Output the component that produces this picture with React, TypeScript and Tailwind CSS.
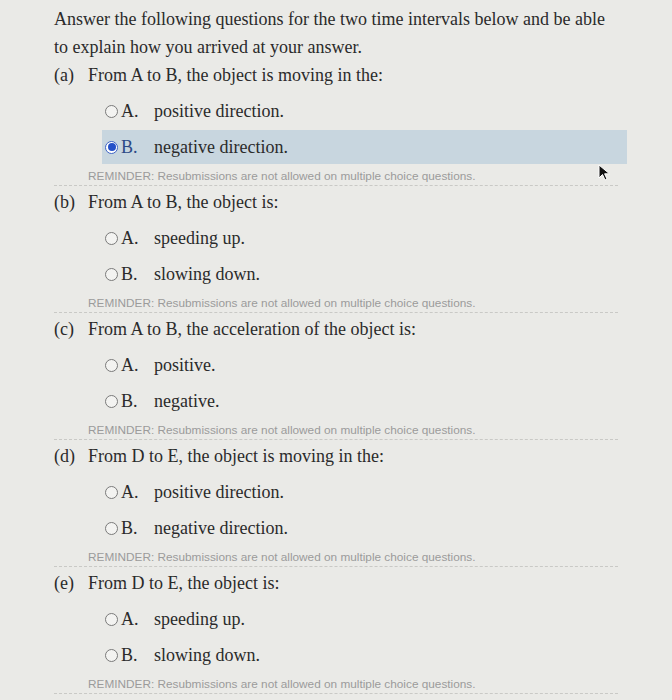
import React from "react";

type Question = {
  label: string;
  prompt: string;
  options: [string, string];
  selected?: number;
};

const questions: Question[] = [
  { label: "(a)", prompt: "From A to B, the object is moving in the:", options: ["positive direction.", "negative direction."], selected: 1 },
  { label: "(b)", prompt: "From A to B, the object is:", options: ["speeding up.", "slowing down."] },
  { label: "(c)", prompt: "From A to B, the acceleration of the object is:", options: ["positive.", "negative."] },
  { label: "(d)", prompt: "From D to E, the object is moving in the:", options: ["positive direction.", "negative direction."] },
  { label: "(e)", prompt: "From D to E, the object is:", options: ["speeding up.", "slowing down."] },
];

function Radio({ checked }: { checked: boolean }) {
  return checked ? (
    <span className="w-[13px] h-[13px] rounded-full border border-[#3d63c4] bg-white flex items-center justify-center shrink-0">
      <span className="w-[8px] h-[8px] rounded-full bg-[#2450c8]" />
    </span>
  ) : (
    <span className="w-[13px] h-[13px] rounded-full border border-[#7a7a7a] bg-[#f3f3f1] shrink-0" />
  );
}

function Cursor() {
  return (
    <svg className="absolute left-[598px] top-[164px]" width="14" height="18" viewBox="0 0 14 18">
      <path d="M1 1 L1 14 L4.5 10.5 L7 16 L9 15 L6.6 9.8 L11.5 9.8 Z" fill="#111" stroke="#fff" strokeWidth="1" />
    </svg>
  );
}

export default function App() {
  return (
    <main className="relative w-[672px] h-[700px] overflow-hidden bg-[#eaeae7] text-[#2b2b2b]" style={{ fontFamily: '"Liberation Serif", "Times New Roman", serif' }}>
      <div className="pl-[54px] pt-[5px] text-[18px] leading-[28px]">
        <p>Answer the following questions for the two time intervals below and be able</p>
        <p>to explain how you arrived at your answer.</p>
      </div>

      <div className="flex flex-col">
        {questions.map((q, qi) => (
          <section key={q.label} className={qi === 0 ? "" : "pt-[2px]"}>
            <div className="flex pl-[54px] text-[18px] leading-[28px]">
              <span className="w-[34px]">{q.label}</span>
              <span>{q.prompt}</span>
            </div>
            <div className="flex flex-col gap-[2px] pt-[5px]">
              {q.options.map((opt, oi) => {
                const checked = q.selected === oi;
                return (
                  <div
                    key={opt}
                    className={`ml-[102px] w-[525px] h-[34px] flex items-center pl-[3px] text-[18px] ${checked ? "bg-[#c8d6df]" : ""}`}
                  >
                    <Radio checked={checked} />
                    <span className={`ml-[3px] w-[33px] ${checked ? "text-[#2c4a86]" : ""}`}>{oi === 0 ? "A." : "B."}</span>
                    <span>{opt}</span>
                  </div>
                );
              })}
            </div>
            <p className="pl-[88px] pt-[4px] text-[11.8px] leading-[16px] text-[#9b9b9b]" style={{ fontFamily: '"Liberation Sans", Arial, sans-serif' }}>
              REMINDER: Resubmissions are not allowed on multiple choice questions.
            </p>
            <div className="ml-[54px] w-[564px] mt-[1px] border-t border-dashed border-[#c9c9c6]" />
          </section>
        ))}
      </div>

      <Cursor />
    </main>
  );
}
